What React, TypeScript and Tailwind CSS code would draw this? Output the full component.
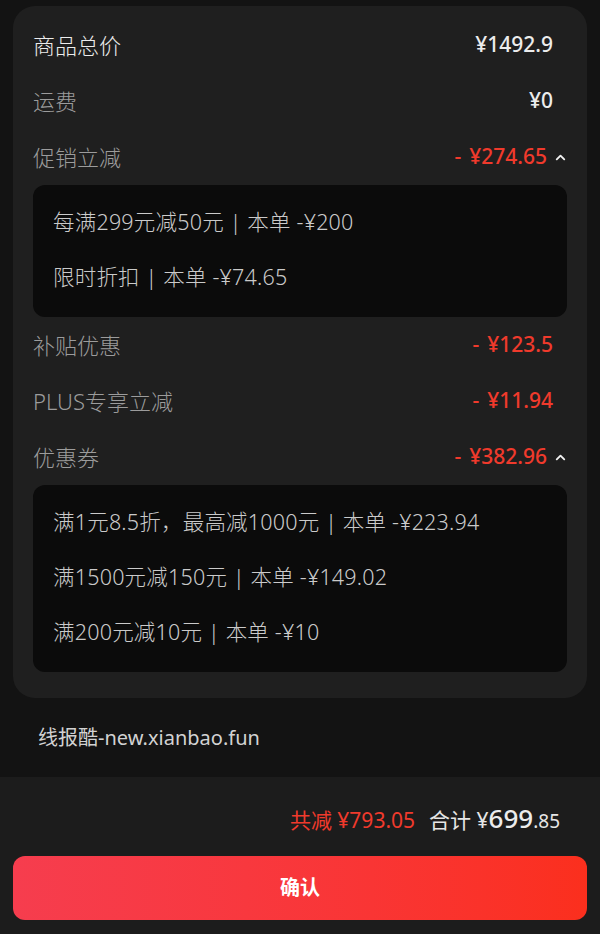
import { ChevronUp } from 'lucide-react'

type Row = {
	label: string
	value: string
	strong?: boolean
	discount?: boolean
	details?: string[]
}

const rows: Row[] = [
	{ label: '商品总价', value: '¥1492.9', strong: true },
	{ label: '运费', value: '¥0' },
	{
		label: '促销立减',
		value: '¥274.65',
		discount: true,
		details: ['每满299元减50元 | 本单 -¥200', '限时折扣 | 本单 -¥74.65'],
	},
	{ label: '补贴优惠', value: '¥123.5', discount: true },
	{ label: 'PLUS专享立减', value: '¥11.94', discount: true },
	{
		label: '优惠券',
		value: '¥382.96',
		discount: true,
		details: [
			'满1元8.5折，最高减1000元 | 本单 -¥223.94',
			'满1500元减150元 | 本单 -¥149.02',
			'满200元减10元 | 本单 -¥10',
		],
	},
]

const font = { fontFamily: '"Noto Sans", "Noto Sans CJK SC", sans-serif' }

function PriceRow({ row }: { row: Row }) {
	return (
		<>
			<div className="h-[56px] flex items-center justify-between pl-[20px] pr-[20px]">
				<span className={`text-[22px] font-light ${row.strong ? 'text-[#ececec]' : 'text-[#9c9c9c]'}`}>
					{row.label}
				</span>
				<span className="flex items-center">
					<span
						className={`text-[21px] font-medium ${row.discount ? 'text-[#f03a2c]' : 'text-[#ececec]'} ${row.details ? '' : 'mr-[14px]'}`}
					>
						{row.discount && <span className="mr-[8px]">-</span>}
						{row.value}
					</span>
					{row.details && (
						<ChevronUp size={15} strokeWidth={3} className="text-[#f0f0f0] ml-[6px] -mr-[1px]" />
					)}
				</span>
			</div>
			{row.details && (
				<div className="mx-[20px] rounded-[12px] bg-[#0b0b0b] pt-[10px] pb-[12px] px-[20px]">
					{row.details.map(d => (
						<div key={d} className="h-[55px] flex items-center text-[21.5px] font-light tracking-[0.2px] text-[#cacaca]">
							{d}
						</div>
					))}
				</div>
			)}
		</>
	)
}

export default function App() {
	return (
		<div className="w-[600px] h-[934px] bg-[#131313] flex flex-col overflow-hidden" style={font}>
			<div className="pt-[6px] px-[13px]">
				<div className="rounded-[22px] bg-[#1f1f1f] pt-[11px] pb-[26px]">
					{rows.map(r => (
						<PriceRow key={r.label} row={r} />
					))}
				</div>
			</div>

			<div className="h-[79px] flex items-center pl-[38px] text-[20px] text-[#d2d2d2]">
				线报酷-new.xianbao.fun
			</div>

			<div className="flex-1 bg-[#1c1c1c] flex flex-col">
				<div className="h-[79px] flex items-baseline justify-end pr-[40px] pt-[22px]">
					<span className="text-[21px] text-[#f03a2c] mr-[14px]">共减 ¥793.05</span>
					<span className="text-[21px] text-[#e6e6e6]">合计 ¥</span>
					<span className="text-[26px] font-medium text-[#ececec]">699</span>
					<span className="text-[19px] text-[#e6e6e6]">.85</span>
				</div>
				<div className="px-[13px]">
					<button className="w-full h-[64px] rounded-[12px] bg-gradient-to-r from-[#f63d4e] to-[#fb2f1d] text-white text-[20px] font-bold">
						确认
					</button>
				</div>
			</div>
		</div>
	)
}
